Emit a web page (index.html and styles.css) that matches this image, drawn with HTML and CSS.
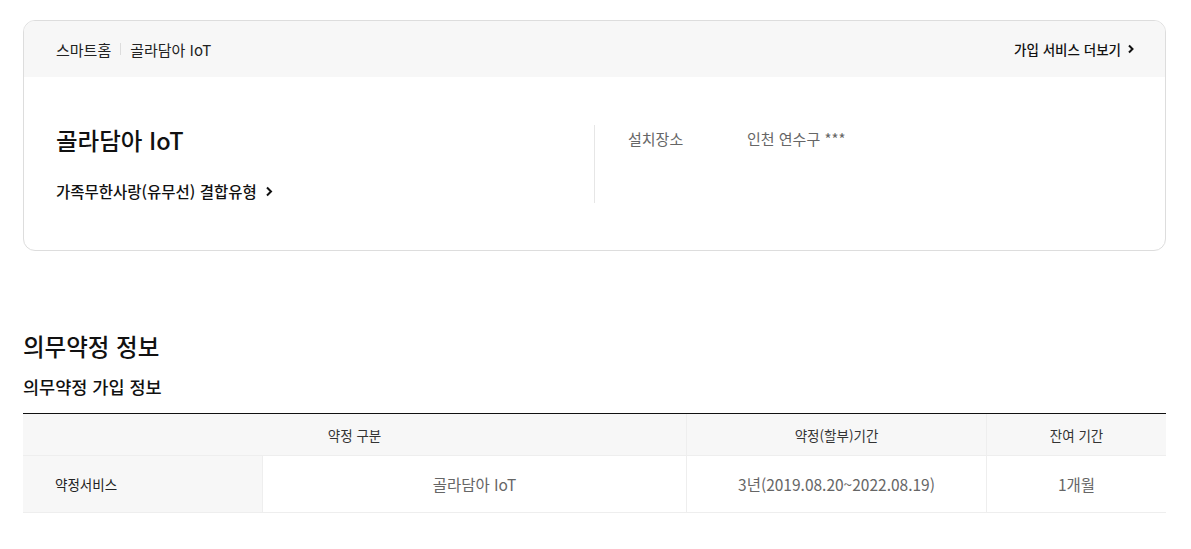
FILE: index.html
```html
<!DOCTYPE html>
<html lang="ko">
<head>
    <meta charset="UTF-8">
    <title>골라담아 IoT</title>
    <link rel="stylesheet" href="styles.css">
</head>
<body>
    <div class="container">
        <!-- Service card -->
        <div class="card">
            <div class="card-head">
                <div class="crumbs">
                    <span>스마트홈</span>
                    <span class="crumb-sep"></span>
                    <span>골라담아 IoT</span>
                </div>
                <a class="more" href="#">가입 서비스 더보기
                    <svg width="8" height="10" viewBox="0 0 8 10"><path d="M2 1.5 5.5 5 2 8.5" fill="none" stroke="#111" stroke-width="2"/></svg>
                </a>
            </div>
            <div class="card-body">
                <div class="card-main">
                    <h2 class="svc-name">골라담아 IoT</h2>
                    <a class="svc-link" href="#">가족무한사랑(유무선) 결합유형
                        <svg width="8" height="11" viewBox="0 0 8 11"><path d="M2 1.5 6 5.5 2 9.5" fill="none" stroke="#111" stroke-width="2"/></svg>
                    </a>
                </div>
                <div class="card-side">
                    <dl class="info">
                        <dt>설치장소</dt>
                        <dd>인천 연수구 ***</dd>
                    </dl>
                </div>
            </div>
        </div>

        <!-- Contract info -->
        <h2 class="section-title">의무약정 정보</h2>
        <h3 class="sub-title">의무약정 가입 정보</h3>
        <table class="contract">
            <colgroup>
                <col style="width:239px">
                <col style="width:424px">
                <col style="width:300px">
                <col>
            </colgroup>
            <thead>
                <tr>
                    <th colspan="2">약정 구분</th>
                    <th>약정(할부)기간</th>
                    <th>잔여 기간</th>
                </tr>
            </thead>
            <tbody>
                <tr>
                    <th class="row-head">약정서비스</th>
                    <td>골라담아 IoT</td>
                    <td>3년(2019.08.20~2022.08.19)</td>
                    <td>1개월</td>
                </tr>
            </tbody>
        </table>
    </div>
</body>
</html>
```

FILE: styles.css
```css
/* Reset */
body, h2, h3, dl, dd, table {
    margin: 0;
    padding: 0;
}

body {
    font-family: "Noto Sans CJK KR", "Noto Sans", sans-serif;
    color: #111;
    background: #fff;
}

a {
    color: inherit;
    text-decoration: none;
}

.container {
    padding: 20px 25px 0 23px;
}

.card {
    border: 1px solid #ddd;
    border-radius: 12px;
    overflow: hidden;
}

.card-head {
    display: flex;
    justify-content: space-between;
    align-items: center;
    height: 56px;
    padding: 0 30px 0 32px;
    background: #f7f7f7;
}

.crumbs {
    display: flex;
    align-items: center;
    font-size: 15px;
    color: #222;
}

.crumb-sep {
    width: 1px;
    height: 12px;
    background: #ddd;
    margin: 0 9px;
}

.more {
    display: flex;
    align-items: center;
    gap: 6px;
    font-size: 13.5px;
    font-weight: 500;
}

.card-body {
    display: flex;
    padding: 48px 0 47px;
}

.card-main {
    width: 538px;
    padding-left: 32px;
    border-right: 1px solid #e6e6e6;
}

.svc-name {
    font-size: 23.5px;
    font-weight: 500;
    line-height: 30px;
}

.svc-link {
    display: inline-flex;
    align-items: center;
    gap: 8px;
    margin-top: 26px;
    font-size: 15.5px;
    font-weight: 500;
    line-height: 20px;
}

.card-side {
    padding-left: 33px;
}

.info {
    display: flex;
    font-size: 15px;
    line-height: 22px;
    color: #666;
    margin-top: 3px;
}

.info dt {
    width: 119px;
}

.section-title {
    margin-top: 80px;
    font-size: 23.5px;
    font-weight: 500;
    line-height: 30px;
}

.sub-title {
    margin: 14px 0 14px;
    font-size: 17.5px;
    font-weight: 500;
    line-height: 24px;
}

.contract {
    width: 100%;
    border-collapse: separate;
    border-spacing: 0;
    border-top: 1px solid #111;
    table-layout: fixed;
}

.contract th,
.contract td {
    padding: 0;
    border-bottom: 1px solid #eee;
    border-left: 1px solid #eee;
    text-align: center;
}

.contract th:first-child,
.contract td:first-child {
    border-left: none;
}

.contract thead th {
    height: 41px;
    background: #f7f7f7;
    font-size: 13.5px;
    font-weight: 400;
    color: #333;
}

.contract tbody td,
.contract tbody th {
    height: 56px;
}

.contract tbody td {
    font-size: 15.5px;
    color: #666;
}

.contract .row-head {
    background: #f7f7f7;
    font-size: 13.5px;
    font-weight: 400;
    color: #222;
    text-align: left;
    padding-left: 32px;
}
```
